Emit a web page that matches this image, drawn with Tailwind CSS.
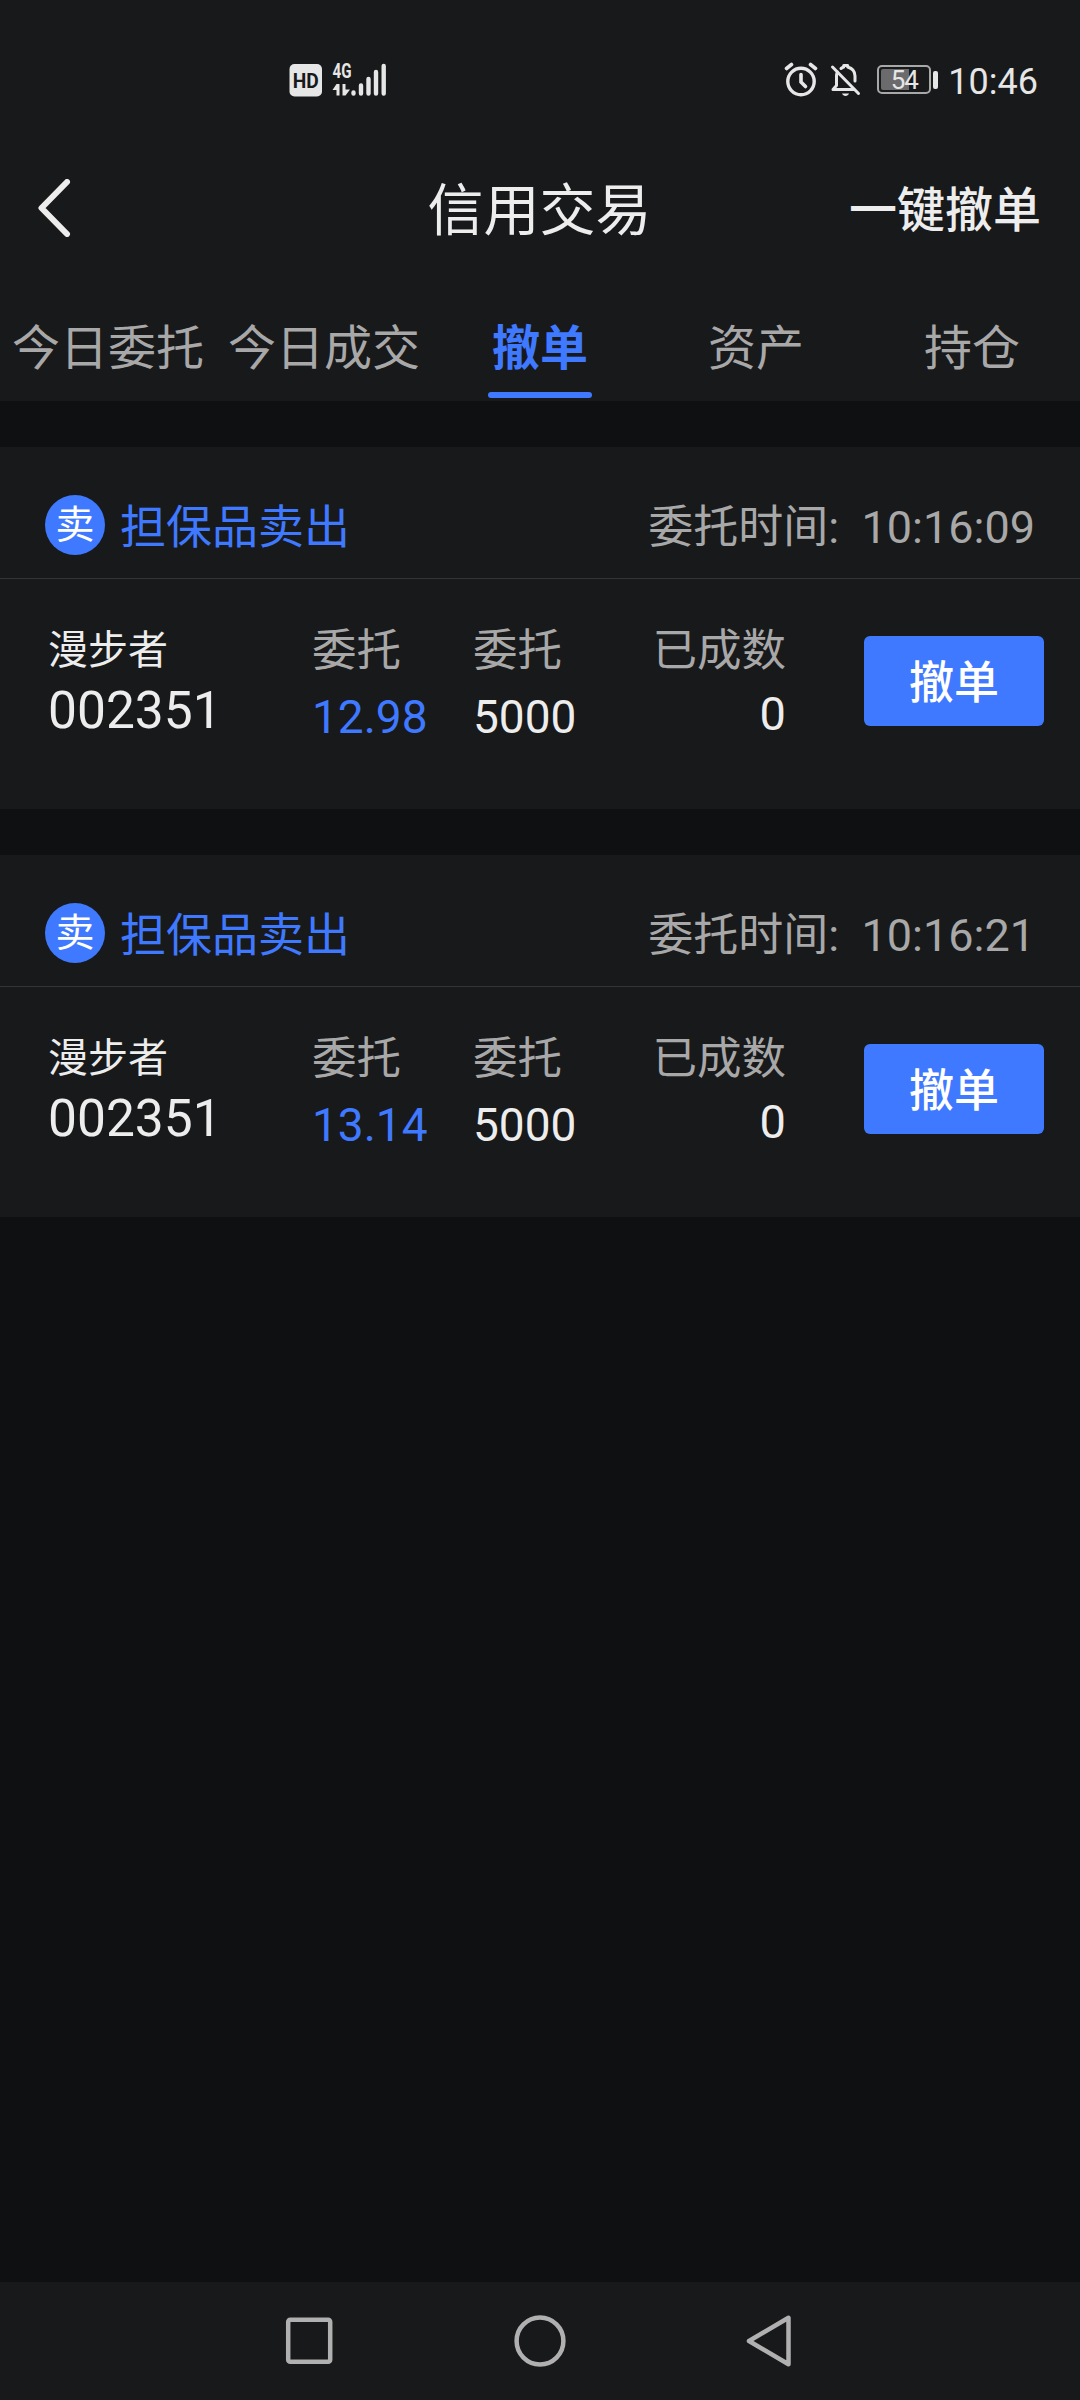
<!DOCTYPE html>
<html lang="zh-CN">
<head>
  <meta charset="UTF-8">
  <meta name="viewport" content="width=device-width, initial-scale=1.0">
  <title>信用交易</title>
  <script src="https://cdn.jsdelivr.net/npm/@tailwindcss/browser@4"></script>
</head>
<body class="bg-[#0f1012] font-['Roboto','Noto_Sans_CJK_SC',sans-serif] text-[#ededed]">
<div class="flex h-[2400px] w-[1080px] flex-col overflow-hidden">

  <!-- Status bar -->
  <div class="flex h-[156px] shrink-0 items-center bg-[#18191b] pr-[42px] pl-[289px]">
    <svg class="h-[40px] w-[100px]" viewBox="0 0 100 40" fill="#e6e6e6">
      <rect x="0.5" y="6" width="32.5" height="32.5" rx="5"/>
      <text x="16.7" y="29.5" text-anchor="middle" font-family="Roboto" font-weight="700" font-size="20" textLength="26" lengthAdjust="spacingAndGlyphs" fill="#18191b">HD</text>
      <text x="43.5" y="19.5" font-family="Roboto" font-weight="700" font-size="20" textLength="19" lengthAdjust="spacingAndGlyphs">4G</text>
      <path d="M47.500 26h3v11.500h-3v-5.500h-4zM53.500 26h3v5.500h4.500l-4.500 6h-3z"/>
      <g stroke="#e6e6e6" stroke-width="4.400" stroke-linecap="round">
        <path d="M64.500 34.500v1M72 27.500v8M79.500 21v14.500M87 14v21.500M94.700 8v27.500"/>
      </g>
    </svg>
    <div class="ml-auto flex items-center">
      <svg class="h-[40px] w-[34px]" viewBox="0 0 34 40" fill="none" stroke="#e6e6e6" stroke-linecap="round">
        <circle cx="17" cy="23.500" r="13.200" stroke-width="3.400"/>
        <path d="M17 16.500v7.500l4.500 4.500" stroke-width="3.600"/>
        <path d="M2.500 10.500l5-4M31.500 10.500l-5-4" stroke-width="3.600"/>
      </svg>
      <svg class="ml-[12px] h-[40px] w-[32px]" viewBox="0 0 32 40" fill="none" stroke="#e6e6e6" stroke-linecap="round" stroke-linejoin="round">
        <path d="M2.500 9l26 26.500" stroke-width="3"/>
        <path d="M24 31.500H3l3.500-4V18c0-1.500.3-2.800.8-4" stroke-width="3"/>
        <path d="M11 10.500c1-.8 1.800-1.200 2.700-1.500V7.500h4V9c4.500 1.300 7.300 4.700 7.300 9v5" stroke-width="3"/>
        <path d="M12 35.500h7c-1 3.200-6 3.200-7 0z" fill="#e6e6e6" stroke="none"/>
      </svg>
      <div class="relative ml-[15px] mt-[3px] flex h-[29px] w-[54px] items-center justify-center rounded-[5px] border-2 border-[#a8a8a8]">
        <div class="absolute top-[2px] left-[2px] h-[21px] w-[28px] rounded-l-[2px] bg-[#6b6b6d]"></div>
        <span class="relative text-[26px] leading-none tracking-[-1px] text-[#e6e6e6]">54</span>
      </div>
      <div class="mt-[3px] ml-[2px] h-[18px] w-[5px] rounded-[2px] bg-[#e6e6e6]"></div>
      <div class="mt-[7px] ml-[10px] text-[36px] leading-none text-[#e6e6e6]">10:46</div>
    </div>
  </div>

  <!-- Title bar -->
  <div class="grid h-[104px] shrink-0 grid-cols-3 items-center bg-[#18191b] pr-[39px] pl-[38px]">
    <svg class="h-[58px] w-[34px]" viewBox="0 0 34 58" fill="none" stroke="#ededed" stroke-width="6" stroke-linecap="round" stroke-linejoin="round">
      <path d="M29 3L3.500 29L29 55"/>
    </svg>
    <h1 class="justify-self-center pt-[5px] text-[56px] leading-none">信用交易</h1>
    <button class="justify-self-end pt-[5px] text-[48px] leading-none font-medium">一键撤单</button>
  </div>

  <!-- Tabs -->
  <div class="grid h-[141px] shrink-0 grid-cols-5 grid-rows-[141px] bg-[#18191b] text-center text-[48px] leading-[178px] text-[#a8a8a8]">
    <div>今日委托</div>
    <div>今日成交</div>
    <div class="relative font-bold text-[#3f79ff]">撤单
      <span class="absolute bottom-[3px] left-[56px] h-[6px] w-[104px] rounded-full bg-[#3f79ff]"></span>
    </div>
    <div>资产</div>
    <div>持仓</div>
  </div>

  <!-- Orders -->
  <div class="flex flex-1 flex-col gap-[46px] pt-[46px]">
    <div class="h-[362px] bg-[#18191b]">
      <div class="flex h-[132px] items-center border-b border-[#343537] px-[45px] pt-[25px]">
        <span class="flex size-[60px] items-center justify-center rounded-full bg-[#3f79ff] text-[39px] leading-none text-white">卖</span>
        <span class="ml-[15px] pt-[4px] text-[46px] leading-none text-[#3f79ff]">担保品卖出</span>
        <span class="ml-auto pt-[5px] text-[45px] leading-none whitespace-pre text-[#a8a8a8]">委托时间:  10:16:09</span>
      </div>
      <div class="flex pt-[47px] pl-[48px]">
        <div class="w-[264px]">
          <div class="text-[40px] leading-[50px]">漫步者</div>
          <div class="text-[51.500px] leading-[70px]">002351</div>
        </div>
        <div class="w-[161px]">
          <div class="text-[44.500px] leading-[50px] text-[#a8a8a8]">委托</div>
          <div class="text-[46px] leading-[82px] text-[#3f79ff]">12.98</div>
        </div>
        <div class="w-[179px]">
          <div class="text-[44.500px] leading-[50px] text-[#a8a8a8]">委托</div>
          <div class="text-[46px] leading-[82px]">5000</div>
        </div>
        <div class="w-[134px] text-right">
          <div class="text-[44.500px] leading-[50px] whitespace-nowrap text-[#a8a8a8]">已成数</div>
          <div class="text-[47px] leading-[76px]">0</div>
        </div>
        <button class="mt-[10px] ml-[78px] h-[90px] w-[180px] rounded-[6px] bg-[#3f79ff] pt-[4px] text-[45px] leading-none font-medium text-white">撤单</button>
      </div>
    </div>

    <div class="h-[362px] bg-[#18191b]">
      <div class="flex h-[132px] items-center border-b border-[#343537] px-[45px] pt-[25px]">
        <span class="flex size-[60px] items-center justify-center rounded-full bg-[#3f79ff] text-[39px] leading-none text-white">卖</span>
        <span class="ml-[15px] pt-[4px] text-[46px] leading-none text-[#3f79ff]">担保品卖出</span>
        <span class="ml-auto pt-[5px] text-[45px] leading-none whitespace-pre text-[#a8a8a8]">委托时间:  10:16:21</span>
      </div>
      <div class="flex pt-[47px] pl-[48px]">
        <div class="w-[264px]">
          <div class="text-[40px] leading-[50px]">漫步者</div>
          <div class="text-[51.500px] leading-[70px]">002351</div>
        </div>
        <div class="w-[161px]">
          <div class="text-[44.500px] leading-[50px] text-[#a8a8a8]">委托</div>
          <div class="text-[46px] leading-[82px] text-[#3f79ff]">13.14</div>
        </div>
        <div class="w-[179px]">
          <div class="text-[44.500px] leading-[50px] text-[#a8a8a8]">委托</div>
          <div class="text-[46px] leading-[82px]">5000</div>
        </div>
        <div class="w-[134px] text-right">
          <div class="text-[44.500px] leading-[50px] whitespace-nowrap text-[#a8a8a8]">已成数</div>
          <div class="text-[47px] leading-[76px]">0</div>
        </div>
        <button class="mt-[10px] ml-[78px] h-[90px] w-[180px] rounded-[6px] bg-[#3f79ff] pt-[4px] text-[45px] leading-none font-medium text-white">撤单</button>
      </div>
    </div>
  </div>

  <!-- System navigation -->
  <div class="flex h-[118px] shrink-0 items-center justify-between bg-[#18191b] pr-[288px] pl-[285px]">
    <svg class="size-[48px]" viewBox="0 0 48 48" fill="none" stroke="#b0b0b0" stroke-width="4.500">
      <rect x="3.200" y="2.700" width="42" height="42" rx="2"/>
    </svg>
    <svg class="size-[52px]" viewBox="0 0 52 52" fill="none" stroke="#b0b0b0" stroke-width="4.500">
      <circle cx="26" cy="26" r="23.400"/>
    </svg>
    <svg class="h-[52px] w-[46px]" viewBox="0 0 46 52" fill="none" stroke="#b0b0b0" stroke-width="4.500" stroke-linejoin="round">
      <path d="M42.500 2.800v46.400L3 26z"/>
    </svg>
  </div>
</div>
</body>
</html>
